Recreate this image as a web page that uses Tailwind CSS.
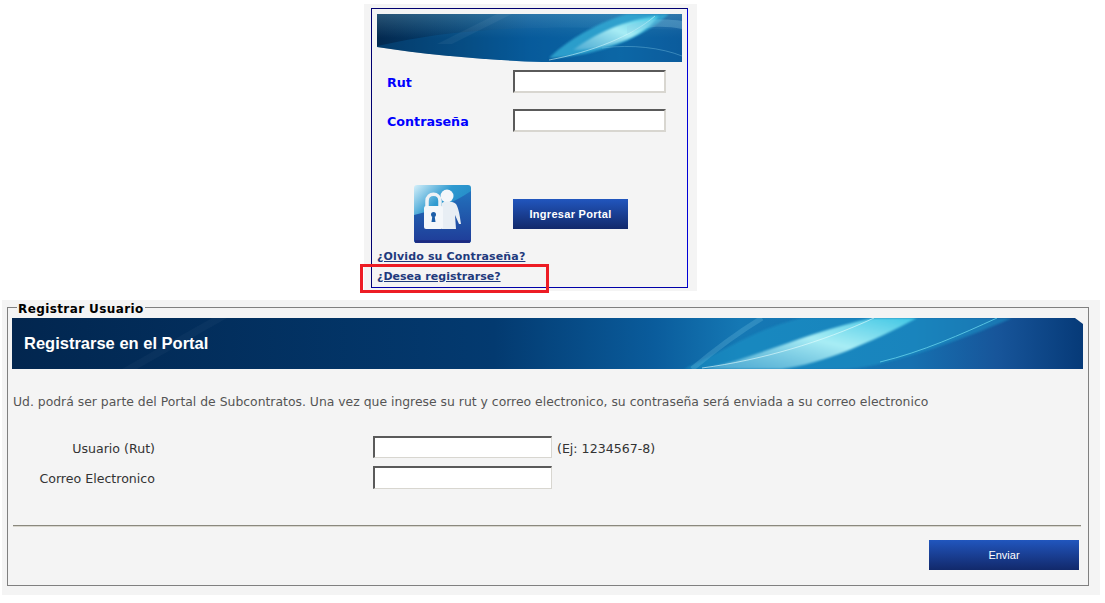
<!DOCTYPE html>
<html lang="es"><head><meta charset="utf-8"><title>Portal</title>
<script src="https://cdn.jsdelivr.net/npm/@tailwindcss/browser@4"></script></head>
<body class="bg-white w-[1105px] h-[603px] overflow-hidden font-['DejaVu_Sans',sans-serif] relative">
<svg width="0" height="0" class="absolute"><defs>
<linearGradient id="bt" x1="0" x2="1" y1="0" y2="0"><stop offset="0" stop-color="#03294f"/><stop offset=".3" stop-color="#054578"/><stop offset=".5" stop-color="#07599a"/><stop offset=".8" stop-color="#0f6cab"/><stop offset="1" stop-color="#0d5a9c"/></linearGradient>
<linearGradient id="btv" x1="0" x2="0" y1="0" y2="1"><stop offset="0" stop-color="#7fb6cc" stop-opacity=".3"/><stop offset=".5" stop-color="#7fb6cc" stop-opacity="0"/></linearGradient>
<linearGradient id="bb" x1="0" x2="1" y1="0" y2="0"><stop offset="0" stop-color="#02264f"/><stop offset=".45" stop-color="#033a70"/><stop offset=".6" stop-color="#0a5c9c"/><stop offset=".68" stop-color="#1578b4"/><stop offset=".84" stop-color="#1670b0"/><stop offset=".92" stop-color="#17559a"/><stop offset="1" stop-color="#063a78"/></linearGradient>
<linearGradient id="glow" x1="0" x2="1" y1="1" y2="0"><stop offset="0" stop-color="#5fb4d8" stop-opacity=".7"/><stop offset=".55" stop-color="#a8edf5"/><stop offset="1" stop-color="#3fc6e4"/></linearGradient>
<linearGradient id="ic" x1="0" x2="1" y1="0" y2="1"><stop offset="0" stop-color="#d4f0fa"/><stop offset=".35" stop-color="#2f9ad0"/><stop offset="1" stop-color="#1578bc"/></linearGradient>
<linearGradient id="ic2" x1="0" x2="0" y1="0" y2="1"><stop offset="0" stop-color="#2272bd"/><stop offset="1" stop-color="#1f3c98"/></linearGradient>
<filter id="s1"><feGaussianBlur stdDeviation="1.2"/></filter>
<filter id="s2"><feGaussianBlur stdDeviation="0.6"/></filter>
</defs></svg>

<section class="ml-[364px] mt-[4px] w-[333px] h-[287px] bg-[#f4f4f4] pt-[4px] pl-[7px]">
  <div class="w-[317px] h-[280px] border-t border-l border-r border-b border-t-[#000070] border-l-[#000070] border-r-[#0000d8] border-b-[#0000a8] pt-[5px] pl-[5px] flex flex-col">
    <svg width="305" height="48" viewBox="0 0 305 48" class="block shrink-0">
      <clipPath id="c1"><path d="M0 0H305V48H165C110 46 50 41 0 33Z"/></clipPath>
      <g clip-path="url(#c1)">
        <rect width="305" height="48" fill="url(#bt)"/>
        <rect width="305" height="48" fill="url(#btv)"/>
        <path d="M0 32C70 16 140 10 305 16V48H0Z" fill="#0a5f9f" opacity=".35"/>
        <path d="M60 30L120 0H135L75 30Z" fill="#fff" opacity=".05"/>
        <path d="M172 44C190 26 222 8 250 0H292C268 22 225 42 172 44Z" fill="#33a9d3" opacity=".85" filter="url(#s1)"/>
        <path d="M196 36C218 20 246 6 282 2C268 20 240 35 196 36Z" fill="url(#glow)" filter="url(#s1)"/>
        <path d="M172 46C215 38 255 22 278 2" stroke="#d8fbff" stroke-width=".8" fill="none" opacity=".7"/>
        <path d="M225 34C255 30 285 34 305 42" stroke="#7cc6e4" stroke-width=".8" fill="none" opacity=".5"/>
        <path d="M250 12C270 4 290 5 305 7V15C285 11 268 12 250 20Z" fill="#8fcfe6" opacity=".3" filter="url(#s2)"/>
      </g>
    </svg>
    <div class="grid grid-cols-[126px_153px] mt-[8px] pl-[10px] gap-y-[16px] items-center">
      <label class="text-[12.7px] font-bold text-[#0000ff] relative top-[1px]">Rut</label>
      <input class="w-[153px] h-[23px] bg-white border-2 border-t-[#5a5a5a] border-l-[#5a5a5a] border-r-[#d8d6d0] border-b-[#d8d6d0]">
      <label class="text-[12.7px] font-bold text-[#0000ff] relative top-[1px]">Contraseña</label>
      <input class="w-[153px] h-[23px] bg-white border-2 border-t-[#5a5a5a] border-l-[#5a5a5a] border-r-[#d8d6d0] border-b-[#d8d6d0]">
    </div>
    <div class="flex mt-[53px] pl-[37px] h-[58px]">
      <svg width="57" height="58" viewBox="0 0 57 58" class="block shrink-0">
        <rect width="57" height="58" rx="3" fill="url(#ic)"/>
        <path d="M0 30C18 26 40 18 57 6V55A3 3 0 0 1 54 58H3A3 3 0 0 1 0 55Z" fill="url(#ic2)"/>
        <path d="M1 56.500H56" stroke="#1c2a80" stroke-width="2.500"/>
        <circle cx="33" cy="11" r="6.500" fill="#f4f7fa"/>
        <path d="M28 18C31 16 38 16 42 19C45 24 46 32 47 39L45 39L41 30L42 44H28Z" fill="#e8eef4"/>
        <path d="M13 22V16C13 7 26 7 26 16V22" stroke="#eef2f6" stroke-width="3.500" fill="none"/>
        <rect x="10" y="21" width="19" height="23" rx="2" fill="#f4f7fa"/>
        <circle cx="19.500" cy="29.500" r="2.500" fill="#1c5ea8"/><path d="M18.500 30H20.500L21.500 37H17.500Z" fill="#1c5ea8"/>
      </svg>
      <button class="ml-[42px] mt-[14px] w-[115px] h-[30px] bg-gradient-to-b from-[#2156be] to-[#12296b] text-white text-[11px] font-bold font-['Liberation_Sans',sans-serif] tracking-[0.3px]">Ingresar Portal</button>
    </div>
    <a href="#" class="mt-[5px] h-[19px] leading-[17px] text-[11px] font-bold underline text-[#1f3a7d] tracking-[0.15px]">¿Olvido su Contraseña?</a>
    <a href="#" class="h-[19px] leading-[19px] text-[11px] font-bold underline text-[#1f3a7d] tracking-[0.02px]">¿Desea registrarse?</a>
  </div>
</section>

<div class="absolute left-[360px] top-[264px] w-[189px] h-[29px] border-[3px] border-[#ed1c24]"></div>

<section class="ml-[2px] mt-[9px] w-[1098px] h-[295px] bg-[#f4f4f4] pl-[5px]">
  <fieldset class="w-[1082px] h-[286px] border border-[#808080] pl-[4px] pr-[5px]">
    <legend class="ml-[5px] px-[1px] text-[12px] leading-[14px] font-bold text-black tracking-[0.4px] relative top-[2px]">Registrar Usuario</legend>
    <div class="relative w-[1071px] h-[51px] mt-[4px]">
      <svg width="1071" height="51" viewBox="0 0 1071 51" class="absolute inset-0">
        <rect width="1071" height="51" fill="url(#bb)"/>
        <path d="M110 51L200 0H215L125 51Z" fill="#fff" opacity=".03"/>
        <path d="M672 51C715 32 740 12 790 0H1000C950 22 870 51 830 51Z" fill="#1f96c9" opacity=".55" filter="url(#s1)"/>
        <path d="M692 51C750 38 800 12 862 0H905C860 24 810 46 770 51Z" fill="url(#glow)" filter="url(#s1)"/>
        <path d="M690 50C750 42 810 24 862 0" stroke="#eaffff" stroke-width="1" fill="none" opacity=".6"/>
        <path d="M868 44C910 34 950 16 985 0" stroke="#57c3e2" stroke-width="1" fill="none"/>
        <path d="M680 51C705 30 730 12 750 0" stroke="#7cc6e4" stroke-width="5" fill="none" opacity=".25"/>
        <path d="M1063 0H1071V6Z" fill="#f4f4f4"/>
      </svg>
      <h1 class="relative pl-[12px] leading-[51px] text-[16.5px] font-bold text-white font-['Liberation_Sans',sans-serif]">Registrarse en el Portal</h1>
    </div>
    <p class="ml-[1px] mt-[25px] text-[12.4px] leading-[16px] text-[#555] whitespace-nowrap">Ud. podrá ser parte del Portal de Subcontratos. Una vez que ingrese su rut y correo electronico, su contraseña será enviada a su correo electronico</p>
    <div class="grid grid-cols-[142px_218px_179px_auto] ml-[1px] mt-[26px] gap-y-[8px] items-center">
      <label class="text-right text-[12.6px] text-[#333] relative top-[2px]">Usuario (Rut)</label>
      <span></span>
      <input class="w-[179px] h-[22px] bg-white border-t-2 border-l-2 border-r border-b border-t-[#5a5a5a] border-l-[#5a5a5a] border-r-[#d8d6d0] border-b-[#d8d6d0]">
      <span class="pl-[5px] text-[12.6px] text-[#333] relative top-[2px]">(Ej: 1234567-8)</span>
      <label class="text-right text-[12.6px] text-[#333] relative top-[2px]">Correo Electronico</label>
      <span></span>
      <input class="w-[179px] h-[23px] bg-white border-t-2 border-l-2 border-r border-b border-t-[#5a5a5a] border-l-[#5a5a5a] border-r-[#d8d6d0] border-b-[#d8d6d0]">
      <span></span>
    </div>
    <hr class="ml-[1px] mt-[36px] w-[1068px] h-[2px] border-0 border-t border-t-[#8a887e] bg-[#d8d6ce]">
    <div class="flex justify-end w-[1067px] mt-[13px]">
      <button class="w-[150px] h-[30px] bg-gradient-to-b from-[#2156be] to-[#12296b] text-white text-[11px] font-['Liberation_Sans',sans-serif]">Enviar</button>
    </div>
  </fieldset>
</section>
</body></html>
